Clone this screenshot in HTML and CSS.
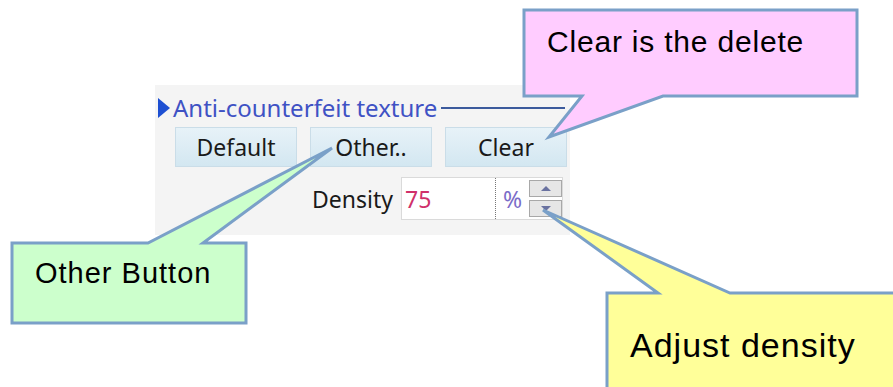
FILE: index.html
```html
<!DOCTYPE html>
<html>
<head>
  <meta name="viewport" content="width=device-width, initial-scale=1.0">
  <title>Anti-counterfeit texture</title>
  <link rel="stylesheet" href="styles.css">
</head>
<body>
  <div class="panel">
    <div class="legend">
      <span class="legend-arrow"></span>
      <span class="legend-text">Anti-counterfeit texture</span>
      <span class="legend-line"></span>
    </div>

    <div class="buttons">
      <button class="btn">Default</button>
      <button class="btn">Other..</button>
      <button class="btn">Clear</button>
    </div>

    <div class="density-row">
      <span class="density-label">Density</span>
      <div class="spin-field">
        <input class="spin-input" type="text" value="75">
        <span class="spin-unit">%</span>
        <div class="spinner">
          <button class="spin-btn"><span class="tri-up"></span></button>
          <button class="spin-btn"><span class="tri-down"></span></button>
        </div>
      </div>
    </div>
  </div>

  <!-- 吹き出し -->
  <svg class="callouts" width="893" height="387" viewBox="0 0 893 387">
    <polygon class="callout-pink" points="524,10 857,10 857,96 663,96 549,137 582,96 524,96"/>
    <polygon class="callout-green" points="12,243 148,243 332,148 203,243 246,243 246,323 12,323"/>
    <polygon class="callout-yellow" points="607,293 658,293 543,210 730,293 900,293 900,400 607,400"/>
  </svg>
  <div class="note note-pink">Clear is the delete</div>
  <div class="note note-green">Other Button</div>
  <div class="note note-yellow">Adjust density</div>
</body>
</html>
```
FILE: styles.css
```css
body {
  margin: 0;
  padding: 0;
  background: #fff;
  font-family: "Noto Sans", "Liberation Sans", sans-serif;
}

.panel {
  margin: 85px 0 0 155px;
  width: 415px;
  height: 150px;
  box-sizing: border-box;
  padding-top: 12px;
  background-color: #f4f4f4;
}

.legend {
  display: flex;
  align-items: center;
  height: 21px;
  padding-left: 3px;
}

.legend-arrow {
  width: 0;
  height: 0;
  border-left: 12px solid #1d4fd2;
  border-top: 10px solid transparent;
  border-bottom: 10px solid transparent;
}

.legend-text {
  margin-left: 3px;
  font-size: 24px;
  line-height: 21px;
  color: #3f52c4;
  white-space: nowrap;
}

.legend-line {
  flex: 1;
  height: 2px;
  margin: 0 5px 0 4px;
  background-color: #3b5a9c;
}

.buttons {
  display: flex;
  gap: 13px;
  margin-top: 9px;
  padding-left: 20px;
}

.btn {
  width: 122px;
  height: 40px;
  padding: 0;
  border: 1px solid #cadde8;
  background: linear-gradient(#e7f2f8, #d3e7f1);
  font-family: "Noto Sans", "Liberation Sans", sans-serif;
  font-size: 23px;
  color: #1a1a1a;
}

.density-row {
  display: flex;
  align-items: center;
  justify-content: flex-end;
  margin-top: 10px;
  padding-right: 7px;
}

.density-label {
  margin-right: 8px;
  font-size: 23px;
  color: #1a1a1a;
}

.spin-field {
  display: flex;
  align-items: center;
  width: 162px;
  height: 43px;
  box-sizing: border-box;
  border: 1px solid #dadada;
  background-color: #fff;
}

.spin-input {
  width: 94px;
  height: 100%;
  box-sizing: border-box;
  padding: 0 0 0 3px;
  border: none;
  border-right: 1px dotted #777;
  outline: none;
  font-family: "Noto Sans", "Liberation Sans", sans-serif;
  font-size: 23px;
  color: #d0306a;
  background: transparent;
}

.spin-unit {
  width: 33px;
  text-align: center;
  font-size: 23px;
  color: #7a6cc8;
}

.spinner {
  display: flex;
  flex-direction: column;
  gap: 3px;
}

.spin-btn {
  display: flex;
  align-items: center;
  justify-content: center;
  width: 33px;
  height: 17px;
  padding: 0;
  border: 1px solid #a8a8a8;
  background: #e6e6e6;
}

.tri-up {
  border-bottom: 5px solid #6a72a0;
  border-left: 5px solid transparent;
  border-right: 5px solid transparent;
}

.tri-down {
  border-top: 5px solid #6a72a0;
  border-left: 5px solid transparent;
  border-right: 5px solid transparent;
}

.callouts {
  position: absolute;
  left: 0;
  top: 0;
}

.callouts polygon {
  stroke: #7aa0c8;
  stroke-width: 3;
  stroke-linejoin: miter;
}

.callout-pink {
  fill: #ffccff;
}

.callout-green {
  fill: #ccffcc;
}

.callout-yellow {
  fill: #ffff99;
}

.note {
  position: absolute;
  font-family: "Liberation Sans", Arial, sans-serif;
  color: #000;
  white-space: nowrap;
  line-height: 1;
}

.note-pink {
  left: 547px;
  top: 27px;
  font-size: 30px;
  letter-spacing: 0.8px;
}

.note-green {
  left: 35px;
  top: 259px;
  font-size: 29px;
  letter-spacing: 1px;
}

.note-yellow {
  left: 630px;
  top: 328px;
  font-size: 34px;
  letter-spacing: 1px;
}
```
